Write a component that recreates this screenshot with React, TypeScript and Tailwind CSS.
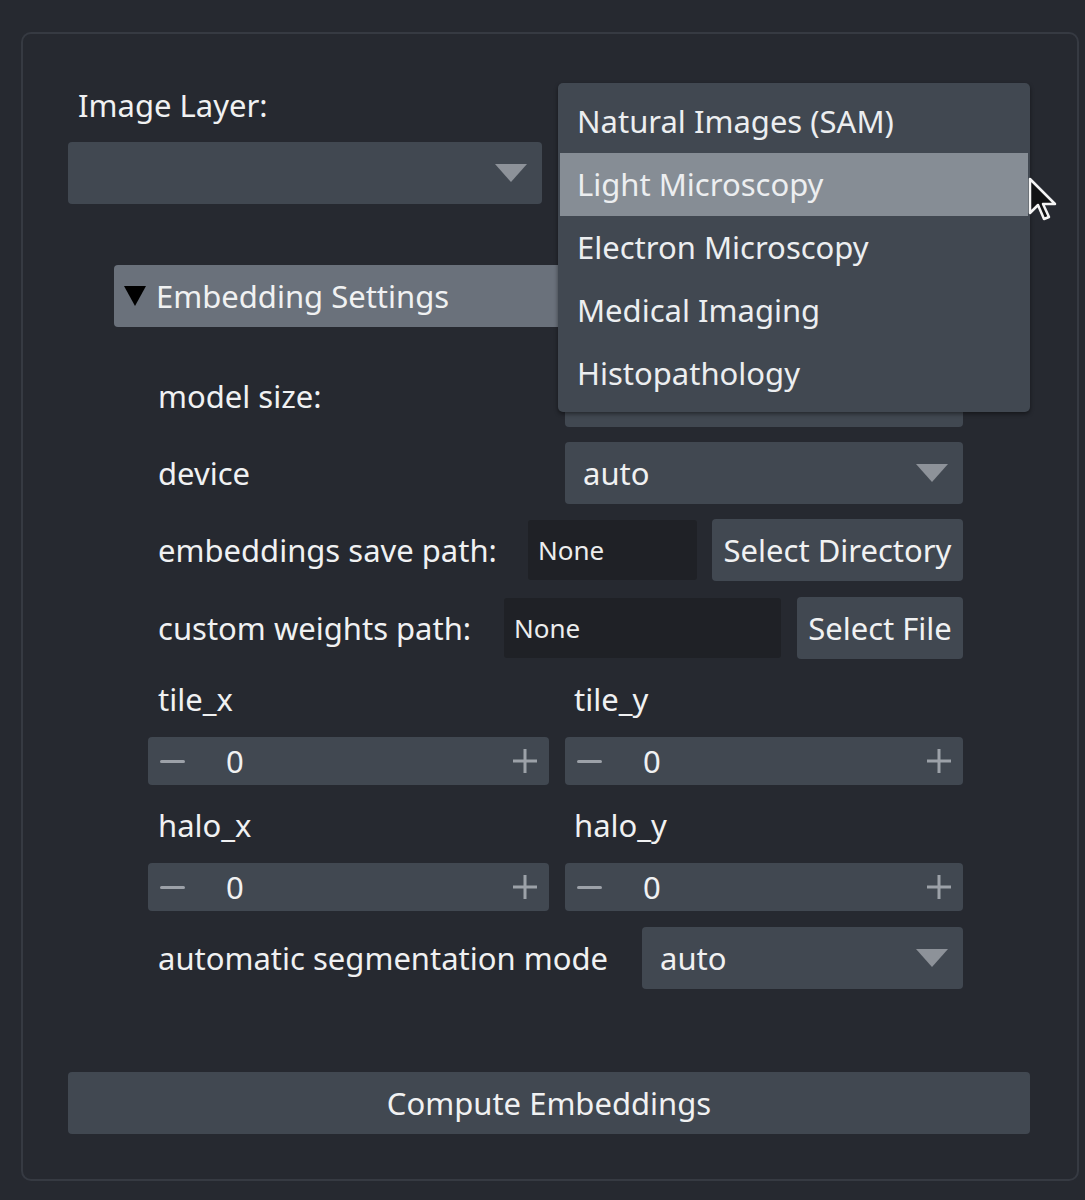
import type { ReactNode } from 'react';

// napari dark theme tokens
// bg #262930, control #414851, header #6a717b, hover #868d95, line edit #1f2126

const FONT = "font-['Noto_Sans','DejaVu_Sans',sans-serif]";

function Arrow() {
  return (
    <svg aria-hidden="true" width="32" height="18" viewBox="0 0 32 18" className="shrink-0">
      <polygon points="0,0 32,0 16,18" fill="#8d9299" />
    </svg>
  );
}

function Combo({ value, className = '' }: { value?: string; className?: string }) {
  return (
    <div
      className={`flex h-[62px] items-center justify-between rounded-[4px] bg-[#414851] pl-[18px] pr-[15px] text-[#f0f1f2] ${className}`}
    >
      <span>{value}</span>
      <Arrow />
    </div>
  );
}

function LineEdit({ className = '' }: { className?: string }) {
  return (
    <div
      className={`flex h-[60px] items-center rounded-[3px] bg-[#1f2126] pl-[10px] text-[26px] text-[#eceded] ${className}`}
    >
      None
    </div>
  );
}

function Button({ children, className = '' }: { children: ReactNode; className?: string }) {
  return (
    <div
      className={`flex h-[62px] items-center justify-center rounded-[4px] bg-[#414851] text-[#f0f1f2] ${className}`}
    >
      {children}
    </div>
  );
}

function SpinBox() {
  return (
    <div className="flex h-[48px] items-center rounded-[4px] bg-[#414851] pl-[12px] pr-[12px] text-[#f0f1f2]">
      <span className="inline-block h-[3px] w-[25px] rounded-sm bg-[#9ca1a8]" />
      <span className="ml-[41px] flex-1">0</span>
      <svg aria-hidden="true" width="24" height="24" viewBox="0 0 24 24">
        <rect x="10.5" y="0" width="3" height="24" fill="#9ca1a8" />
        <rect x="0" y="10.5" width="24" height="3" fill="#9ca1a8" />
      </svg>
    </div>
  );
}

function Cursor() {
  return (
    <svg
      aria-hidden="true"
      width="32"
      height="50"
      viewBox="0 0 32 50"
      className="absolute left-[1028px] top-[177px]"
    >
      <path
        d="M2 2 L2 36 L10 28 L16 42 L21 40 L15 27 L27 27 Z"
        fill="#111214"
        stroke="#f4f4f4"
        strokeWidth="2.5"
        strokeLinejoin="round"
      />
    </svg>
  );
}

const MENU_ITEMS = [
  'Natural Images (SAM)',
  'Light Microscopy',
  'Electron Microscopy',
  'Medical Imaging',
  'Histopathology',
];

function ModelMenu() {
  return (
    <div className="absolute left-[558px] top-[83px] w-[472px] rounded-[5px] bg-[#414851] py-[7px] shadow-[0_2px_4px_rgba(0,0,0,0.45)]">
      {MENU_ITEMS.map((item, i) => (
        <div
          key={item}
          className={[
            'mx-[2px] flex h-[63px] items-center pl-[17px] text-[#eceef0]',
            i === 1 ? 'bg-[#868d95]' : '',
          ].join(' ')}
        >
          {item}
        </div>
      ))}
    </div>
  );
}

export default function App() {
  return (
    <div className={`relative h-[1200px] w-[1085px] overflow-hidden bg-[#262930] text-[31px] leading-none ${FONT}`}>
      <div className="absolute left-[21px] top-[32px] h-[1149px] w-[1058px] rounded-[10px] border-2 border-[#363a42]" />

      <div className="relative flex flex-col pl-[68px] pr-[55px] pt-[84px]">
        {/* top row: image layer + model (model combo sits under the open menu) */}
        <div className="grid grid-cols-[474px_472px] gap-[16px]">
          <div className="flex flex-col">
            <div className="flex h-[42px] items-center pl-[10px] text-[#f0f1f2]">Image Layer:</div>
            <Combo className="mt-[16px]" />
          </div>
          <div className="flex flex-col">
            <div className="h-[42px]" />
            <Combo className="mt-[16px]" />
          </div>
        </div>

        {/* collapsible embedding settings */}
        <div className="ml-[46px] mt-[61px] flex w-[849px] flex-col">
          <div className="flex h-[62px] items-center rounded-[4px] bg-[#6a717b] pl-[10px] text-[#f0f1f2]">
            <svg aria-hidden="true" width="22" height="20" viewBox="0 0 22 20" className="mr-[10px]">
              <polygon points="0,0 22,0 11,20" fill="#000" />
            </svg>
            Embedding Settings
          </div>

          <div className="ml-[34px] flex w-[815px] flex-col text-[#f0f1f2]">
            <div className="mt-[38px] flex h-[62px] items-center">
              <span className="w-[417px] pl-[10px]">model size:</span>
              <Combo className="flex-1" />
            </div>
            <div className="mt-[15px] flex h-[62px] items-center">
              <span className="w-[417px] pl-[10px]">device</span>
              <Combo className="flex-1" value="auto" />
            </div>
            <div className="mt-[15px] flex h-[62px] items-center">
              <span className="w-[380px] pl-[10px]">embeddings save path:</span>
              <LineEdit className="w-[169px]" />
              <Button className="ml-[15px] flex-1">Select Directory</Button>
            </div>
            <div className="mt-[16px] flex h-[62px] items-center">
              <span className="w-[356px] pl-[10px]">custom weights path:</span>
              <LineEdit className="w-[277px]" />
              <Button className="ml-[16px] flex-1">Select File</Button>
            </div>

            <div className="mt-[20px] grid grid-cols-[401px_398px] gap-x-[16px]">
              <div className="flex h-[40px] items-center pl-[10px]">tile_x</div>
              <div className="flex h-[40px] items-center pl-[9px]">tile_y</div>
              <div className="mt-[18px]"><SpinBox /></div>
              <div className="mt-[18px]"><SpinBox /></div>
              <div className="mt-[20px] flex h-[40px] items-center pl-[10px]">halo_x</div>
              <div className="mt-[20px] flex h-[40px] items-center pl-[9px]">halo_y</div>
              <div className="mt-[18px]"><SpinBox /></div>
              <div className="mt-[18px]"><SpinBox /></div>
            </div>

            <div className="mt-[16px] flex h-[62px] items-center">
              <span className="w-[494px] pl-[10px]">automatic segmentation mode</span>
              <Combo className="flex-1" value="auto" />
            </div>
          </div>
        </div>

        <Button className="mt-[83px] w-[962px]">Compute Embeddings</Button>
      </div>

      <ModelMenu />
      <Cursor />
    </div>
  );
}
